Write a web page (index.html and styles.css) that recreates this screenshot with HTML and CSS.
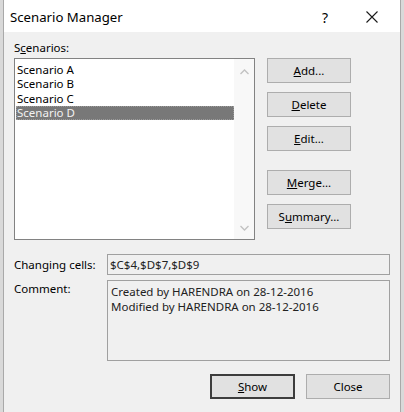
FILE: index.html
```html
<!DOCTYPE html>
<html>
<head>
<meta charset="utf-8">
<link rel="stylesheet" href="styles.css">
</head>
<body>
<div class="dialog">
  <div class="titlebar">
    <span class="title">Scenario Manager</span>
    <span class="help">?</span>
    <span class="close-x"><svg width="12" height="12" viewBox="0 0 12 12"><path d="M0.5 0.5 L11.5 11.5 M11.5 0.5 L0.5 11.5" stroke="#1a1a1a" stroke-width="1.1" fill="none"/></svg></span>
  </div>
  <div class="content">
    <div class="label">S<u>c</u>enarios:</div>
    <div class="main">
      <div class="listbox">
        <div class="items">
          <div class="item">Scenario A</div>
          <div class="item">Scenario B</div>
          <div class="item">Scenario C</div>
          <div class="item selected">Scenario D</div>
        </div>
        <div class="scroll">
          <svg width="9" height="6" viewBox="0 0 9 6"><path d="M0.5 5 L4.5 1 L8.5 5" stroke="#c2c2c2" stroke-width="1.3" fill="none"/></svg>
          <svg width="9" height="6" viewBox="0 0 9 6"><path d="M0.5 1 L4.5 5 L8.5 1" stroke="#c2c2c2" stroke-width="1.3" fill="none"/></svg>
        </div>
      </div>
      <div class="side">
        <div class="btn"><u>A</u>dd...</div>
        <div class="btn"><u>D</u>elete</div>
        <div class="btn"><u>E</u>dit...</div>
        <div class="btn spaced"><u>M</u>erge...</div>
        <div class="btn">S<u>u</u>mmary...</div>
      </div>
    </div>
    <div class="row changing">
      <div class="rlabel">Changing cells:</div>
      <div class="field short">$C$4,$D$7,$D$9</div>
    </div>
    <div class="row comment">
      <div class="rlabel">Comment:</div>
      <div class="field tall">Created by HARENDRA on 28-12-2016<br>Modified by HARENDRA on 28-12-2016</div>
    </div>
    <div class="footer">
      <div class="btn default"><u>S</u>how</div>
      <div class="btn">Close</div>
    </div>
  </div>
</div>
</body>
</html>
```

FILE: styles.css
```css
html, body {
  margin: 0;
  padding: 0;
  background: #d9d9d9;
  font-family: "Noto Sans", "Open Sans", sans-serif;
  font-size: 11.5px;
  color: #000;
}
.dialog {
  margin-left: 3px;
  width: 396px;
  height: 412px;
  border-left: 1px solid #a9a9a9;
  border-right: 1px solid #a9a9a9;
  background: #f0f0f0;
  overflow: hidden;
}
.titlebar {
  height: 32px;
  background: #fff;
  display: flex;
  align-items: center;
  padding-top: 2px;
  box-sizing: border-box;
}
.title {
  font-size: 13.2px;
  padding-left: 6px;
  flex: 1;
}
.help {
  font-size: 14px;
  width: 14px;
  text-align: center;
  margin-right: 34px;
}
.close-x {
  display: flex;
  margin-right: 22px;
}
.content {
  padding: 8px 9px 0 10px;
}
.label {
  height: 16px;
  line-height: 16px;
  margin-bottom: 2px;
}
.main {
  display: flex;
  gap: 12px;
  height: 182px;
}
.listbox {
  width: 241px;
  height: 182px;
  box-sizing: border-box;
  border: 1px solid #828282;
  background: #fff;
  display: flex;
}
.items {
  flex: 1;
  padding: 4px 0 0 1px;
}
.item {
  height: 14.33px;
  line-height: 14px;
  padding-left: 1px;
  box-sizing: border-box;
}
.item.selected {
  background: #787878;
  color: #f2f2f2;
  outline: 1px dotted #9a9a9a;
  outline-offset: -1px;
}
.scroll {
  width: 20px;
  background: #f8f8f8;
  display: flex;
  flex-direction: column;
  justify-content: space-between;
  align-items: center;
  padding: 10px 0 8px;
}
.side {
  display: flex;
  flex-direction: column;
  gap: 9px;
}
.btn {
  width: 84px;
  height: 25px;
  box-sizing: border-box;
  border: 1px solid #adadad;
  background: #e1e1e1;
  display: flex;
  align-items: center;
  justify-content: center;
  line-height: 1;
}
.btn.spaced {
  margin-top: 10px;
}
.row {
  display: flex;
}
.rlabel {
  width: 93px;
  box-sizing: border-box;
}
.changing {
  margin-top: 14px;
  align-items: center;
}
.comment {
  margin-top: 5px;
  align-items: flex-start;
}
.comment .rlabel {
  line-height: 15px;
  padding-top: 1px;
}
.field {
  width: 283px;
  box-sizing: border-box;
  border: 1px solid #a0a0a0;
  background: #f0f0f0;
  color: #222;
  padding-left: 2px;
}
.field.short {
  height: 21px;
  line-height: 19px;
}
.field.tall {
  height: 81px;
  line-height: 15px;
  padding: 3px 0 0 3px;
}
.footer {
  display: flex;
  justify-content: flex-end;
  gap: 11px;
  margin-top: 13px;
  padding-right: 1px;
}
.footer .btn {
  height: 25px;
}
.btn.default {
  border: 2px solid #3d3d3d;
  width: 85px;
}
```
